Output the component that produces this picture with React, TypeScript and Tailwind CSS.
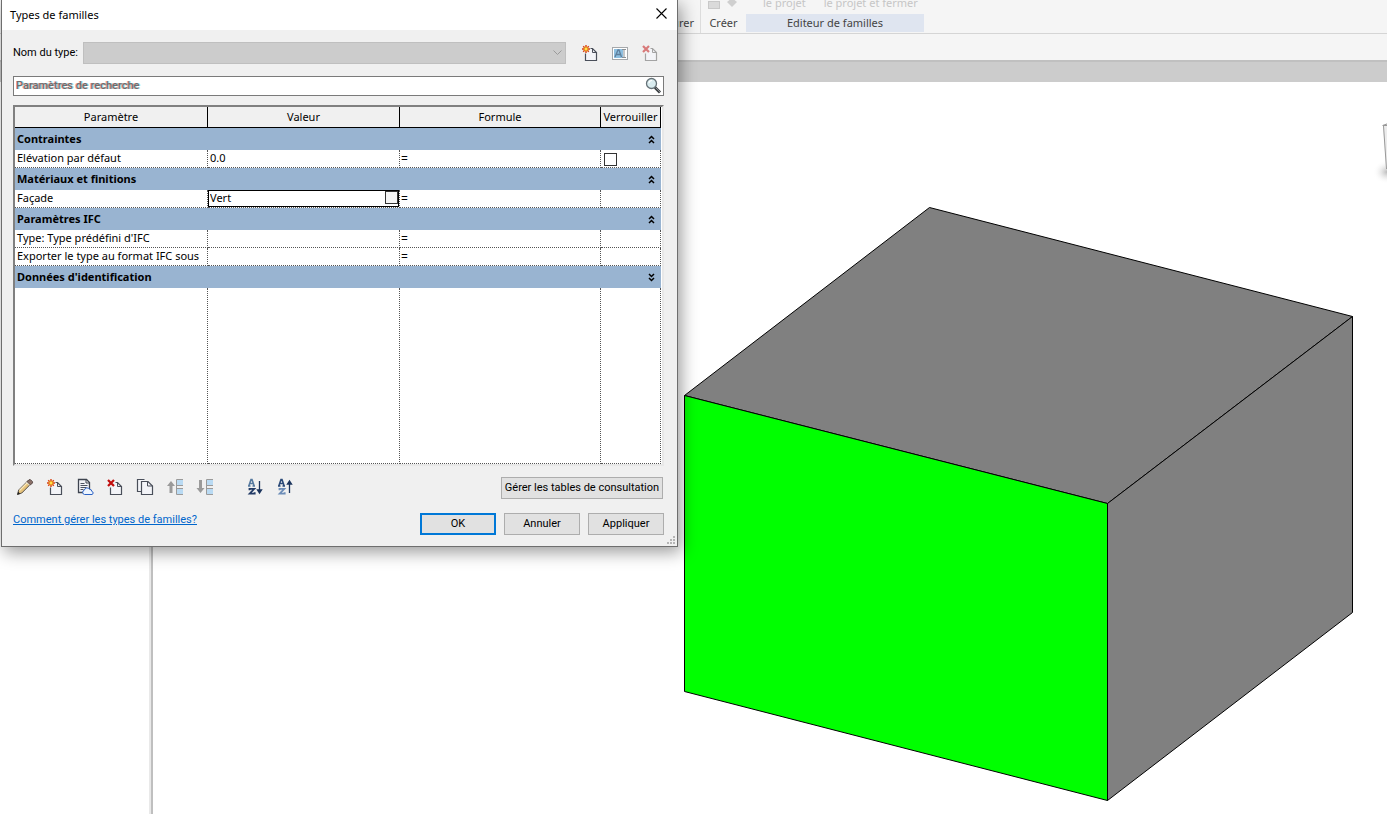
import type { ReactNode } from "react";

function Svg({ children, size = 18 }: { children: ReactNode; size?: number }) {
  return (
    <svg width={size} height={size} viewBox={`0 0 ${size} ${size}`} fill="none" aria-hidden="true">
      {children}
    </svg>
  );
}

function Page({ stroke = "#4a4f5a" }: { stroke?: string }) {
  return (
    <>
      <path d="M8 4.500h3l4.500 4v8.500h-11V9.500L8 9z" fill="#f3f4f8" />
      <path d="M4.500 9.500v7h11V8.500l-4-4H9.500" stroke={stroke} strokeWidth="1.200" />
      <path d="M11.500 4.500v4h4" stroke={stroke} />
    </>
  );
}

function Spark() {
  return (
    <>
      <path d="M5 1v8M1 5h8M2.200 2.200l5.600 5.600M7.800 2.200L2.200 7.800" stroke="#d8400f" strokeWidth="1.400" />
      <circle cx="5" cy="5" r="1.900" fill="#ffe14d" stroke="#e88a10" strokeWidth=".8" />
    </>
  );
}

function NewIcon() {
  return (
    <Svg>
      <Page />
      <Spark />
    </Svg>
  );
}

function DeleteIcon({ muted = false }: { muted?: boolean }) {
  return (
    <Svg>
      <Page stroke={muted ? "#a3a3a3" : "#4a4f5a"} />
      <path d="M2 2l6 6M8 2L2 8" stroke={muted ? "#d87a7a" : "#c00d0d"} strokeWidth="2.200" />
    </Svg>
  );
}

function RenameIcon() {
  return (
    <Svg>
      <rect x="1.500" y="3.500" width="15" height="12" fill="#fff" stroke="#a5a8ab" />
      <rect x="3" y="5" width="9" height="9" fill="#8dbfe0" />
      <path d="M4 13l3-7h1l2.500 7M5.500 10.500h4" stroke="#5f7f9c" strokeWidth="1.300" />
      <path d="M11 5.500h4M13 5.500v8M11 13.500h4" stroke="#8a8f94" />
    </Svg>
  );
}

function PencilIcon() {
  return (
    <Svg>
      <path d="M1.500 16.500l1.200-4.500L12.500 2.200l3 3L5.800 15z" fill="#e6c27a" stroke="#55504a" />
      <path d="M3.500 12.500L12 4" stroke="#fbe9bd" strokeWidth="1.300" />
      <path d="M11 3.700l2-2h1.500l2 2v1.200l-2 2z" fill="#8b7068" stroke="#5b4d4a" />
      <path d="M10.500 4.200l3.200 3.200" stroke="#dfe3e8" />
      <path d="M1.200 16.800l1-3 2 2z" fill="#222" />
    </Svg>
  );
}

function SharedIcon() {
  return (
    <Svg>
      <path d="M2.500 1.500h8l3 3v10h-11z" fill="#f3f4f8" stroke="#3e444f" strokeWidth="1.300" />
      <path d="M10 1.500v3.500h3.500" stroke="#3e444f" />
      <path d="M4.500 5.500h4M4.500 7.500h7M4.500 9.500h6M4.500 11.500h3" stroke="#4b5260" />
      <path
        d="M8.500 16.500a2.200 2.200 0 01-.2-4.300 2.900 2.900 0 015.400-.8 2 2 0 012.100 2 1.600 1.600 0 01.2 3.100z"
        fill="#eef5ff"
        stroke="#2c62c4"
      />
    </Svg>
  );
}

function CopyIcon() {
  return (
    <Svg>
      <path d="M5 13.500H1.500v-12h7" stroke="#4a4f5a" fill="#f3f4f8" strokeWidth="1.200" />
      <path d="M5.500 3.500h6.500l4.500 4.500v8.500h-11z" fill="#f3f4f8" stroke="#4a4f5a" strokeWidth="1.200" />
      <path d="M11.500 3.500v4.500h5" stroke="#4a4f5a" />
    </Svg>
  );
}

function MoveIcon({ down = false }: { down?: boolean }) {
  return (
    <Svg>
      <rect x="11" y="2" width="6" height="5" fill="#b9daf3" />
      <rect x="11" y="11" width="6" height="5" fill="#b9daf3" />
      <path d="M17 1.500h-6.500v15H17M10.500 7.500H17M10.500 10.500H17" stroke="#9a9a9a" />
      {down ? (
        <path d="M3 2h3v8h2.500l-4 5-4-5H3z" fill="#9a9a9a" />
      ) : (
        <path d="M3.500 15h3V8H9L5 3 1 8h2.500z" fill="#9a9a9a" />
      )}
    </Svg>
  );
}

function SortIcon({ up = false }: { up?: boolean }) {
  return (
    <Svg>
      <path
        d="M3 7.500l2-6h1l2 6M4 5.500h3M2 8h2.500M6.500 8H9"
        stroke={up ? "#2b4a78" : "#55799f"}
        strokeWidth="1.600"
      />
      <path d="M3.500 12.300v-1.500h4.800L3.700 15.700h5v-1.500" stroke={up ? "#6d8db8" : "#223b66"} strokeWidth="1.800" />
      {up ? (
        <path d="M13.500 15V5M11.500 6l2-3 2 3z" stroke="#1c355e" strokeWidth="1.300" fill="#1c355e" />
      ) : (
        <path d="M13.500 3v10M11.500 12l2 3 2-3z" stroke="#1c355e" strokeWidth="1.300" fill="#1c355e" />
      )}
    </Svg>
  );
}

function SearchIcon() {
  return (
    <Svg>
      <path d="M11 10.500l5 5" stroke="#3c4043" strokeWidth="3" />
      <path d="M12 11l4 4" stroke="#8b9094" />
      <circle cx="7.500" cy="6.500" r="5" fill="#d9ecef" stroke="#667278" strokeWidth="1.300" />
      <path d="M5 6a3 3 0 013-2.500" stroke="#fff" strokeWidth="1.200" />
    </Svg>
  );
}

function Chevrons({ down = false }: { down?: boolean }) {
  return (
    <svg width="7" height="9" viewBox="0 0 7 9" fill="none" aria-hidden="true">
      <path
        d={down ? "M1 1l2.500 2.500L6 1M1 5l2.500 2.500L6 5" : "M1 4l2.500-2.500L6 4M1 8l2.500-2.500L6 8"}
        stroke="#000"
        strokeWidth="1.500"
      />
    </svg>
  );
}

function IconButton({ label, children, disabled }: { label: string; children: ReactNode; disabled?: boolean }) {
  return (
    <button type="button" aria-label={label} disabled={disabled} className="flex size-[18px] items-center justify-center">
      {children}
    </button>
  );
}

function PushButton({ children, primary, wide }: { children: ReactNode; primary?: boolean; wide?: boolean }) {
  return (
    <button
      type="button"
      className={`flex h-[22px] items-center justify-center whitespace-nowrap bg-[#e1e1e1] ${
        primary ? "border-2 border-[#0078d7]" : "border border-[#adadad]"
      } ${wide ? "w-[162px]" : "w-[76px]"}`}
    >
      {children}
    </button>
  );
}

function GroupRow({ title, collapsed }: { title: string; collapsed?: boolean }) {
  return (
    <tr className="h-[22px] bg-[#99b4d1]">
      <th colSpan={4} scope="rowgroup" className="p-0 text-left font-bold">
        <div className="flex items-center justify-between pr-1.5 pl-0.5">
          <span>{title}</span>
          <button type="button" aria-label={title} aria-expanded={!collapsed}>
            <Chevrons down={collapsed} />
          </button>
        </div>
      </th>
    </tr>
  );
}

const cell = "border-r border-b border-dotted border-[#555] p-0";

function ParamRow({ name, value, lock }: { name: string; value?: ReactNode; lock?: boolean }) {
  return (
    <tr className="h-[18px]">
      <td className={`${cell} overflow-hidden pb-0.5 pl-0.5 whitespace-nowrap`}>{name}</td>
      <td className={cell}>{value}</td>
      <td className={`${cell} pl-px text-[12px]`}>=</td>
      <td className={`${cell} pl-[3px]`}>
        {lock && (
          <input
            type="checkbox"
            aria-label={`Verrouiller ${name}`}
            className="mt-0.5 block size-[13px] appearance-none border border-[#333] bg-white"
          />
        )}
      </td>
    </tr>
  );
}

function ParameterTable() {
  return (
    <div className="border-2 border-t-[#808080] border-r-[#e8e8e8] border-b-[#e8e8e8] border-l-[#808080] bg-white pr-px font-['Noto_Sans',sans-serif]">
      <table className="w-full table-fixed border-separate border-spacing-0 leading-[14px]">
        <colgroup>
          <col className="w-[193px]" />
          <col className="w-[192px]" />
          <col />
          <col className="w-[60px]" />
        </colgroup>
        <thead>
          <tr className="h-[21px] bg-[#f0f0f0]">
            {["Paramètre", "Valeur", "Formule", "Verrouiller"].map((h) => (
              <th key={h} scope="col" className="border-r border-b border-black p-0 text-center font-normal">
                {h}
              </th>
            ))}
          </tr>
        </thead>
        <tbody>
          <GroupRow title="Contraintes" />
          <ParamRow name="Elévation par défaut" value={<div className="pb-0.5 pl-0.5">0.0</div>} lock />
          <GroupRow title="Matériaux et finitions" />
          <ParamRow
            name="Façade"
            value={
              <div className="flex h-[17px] border border-black">
                <input aria-label="Façade" defaultValue="Vert" className="min-w-0 flex-1 pb-px pl-px outline-none" />
                <button type="button" aria-label="Parcourir" className="size-[13px] border border-[#333] bg-[#f5f5f5]" />
              </div>
            }
          />
          <GroupRow title="Paramètres IFC" />
          <ParamRow name="Type: Type prédéfini d'IFC" />
          <ParamRow name="Exporter le type au format IFC sous" />
          <GroupRow title="Données d'identification" collapsed />
          <tr className="h-[176px]">
            <td className={cell} />
            <td className={cell} />
            <td className={cell} />
            <td className={cell} />
          </tr>
        </tbody>
      </table>
    </div>
  );
}

function FamilyTypesDialog() {
  return (
    <section
      role="dialog"
      aria-labelledby="dialog-title"
      className="absolute top-0 left-px w-[677px] max-w-full border-x border-b border-[#6e6e6e] bg-[#f0f0f0] font-['Roboto',sans-serif] shadow-[3px_5px_16px_rgba(0,0,0,0.4)]"
    >
      <header className="flex h-[30px] items-center justify-between bg-white pr-2.5 pl-2">
        <h1 id="dialog-title" className="font-['Noto_Sans',sans-serif]">Types de familles</h1>
        <button type="button" aria-label="Fermer" className="pb-1">
          <svg width="11" height="11" viewBox="0 0 11 11" aria-hidden="true">
            <path d="M.5.5l10 10M10.500.5l-10 10" stroke="#000" strokeWidth="1.100" />
          </svg>
        </button>
      </header>

      <div className="flex flex-col pt-3 pr-[13px] pb-[11px] pl-[11px]">
        <div className="flex items-center">
          <label htmlFor="type-name" className="w-[70px] whitespace-nowrap">Nom du type:</label>
          <div className="relative flex-1">
            <select
              id="type-name"
              disabled
              className="block h-[22px] w-full appearance-none border border-[#bfbfbf] bg-[#cccccc] opacity-100"
            />
            <svg className="absolute top-2 right-1" width="9" height="6" viewBox="0 0 9 6" fill="none" aria-hidden="true">
              <path d="M.5.5l4 4 4-4" stroke="#9a9a9a" />
            </svg>
          </div>
          <div className="flex gap-3 pr-[5px] pl-[15px]">
            <IconButton label="Nouveau type"><NewIcon /></IconButton>
            <IconButton label="Renommer le type" disabled><RenameIcon /></IconButton>
            <IconButton label="Supprimer le type" disabled><DeleteIcon muted /></IconButton>
          </div>
        </div>

        <div className="mt-3 mb-[9px] flex h-5 items-center border border-[#7a7a7a] bg-white pr-px">
          <input
            type="search"
            aria-label="Paramètres de recherche"
            placeholder="Paramètres de recherche"
            className="min-w-0 flex-1 pl-0.5 outline-none placeholder:font-medium placeholder:text-[#6d6d6d] placeholder:[text-shadow:-1px_0_#ff505080,1px_0_#30d0d080]"
          />
          <IconButton label="Rechercher"><SearchIcon /></IconButton>
        </div>

        <ParameterTable />

        <div className="mt-[11px] flex items-start justify-between pr-px">
          <div className="flex gap-3 pt-px pl-[3px]">
            <IconButton label="Modifier le paramètre"><PencilIcon /></IconButton>
            <IconButton label="Nouveau paramètre"><NewIcon /></IconButton>
            <IconButton label="Paramètre partagé"><SharedIcon /></IconButton>
            <IconButton label="Supprimer le paramètre"><DeleteIcon /></IconButton>
            <IconButton label="Dupliquer"><CopyIcon /></IconButton>
            <IconButton label="Monter" disabled><MoveIcon /></IconButton>
            <IconButton label="Descendre" disabled><MoveIcon down /></IconButton>
            <div className="flex gap-3 pl-5">
              <IconButton label="Tri croissant"><SortIcon /></IconButton>
              <IconButton label="Tri décroissant"><SortIcon up /></IconButton>
            </div>
          </div>
          <PushButton wide>Gérer les tables de consultation</PushButton>
        </div>

        <div className="mt-3.5 flex items-start justify-between">
          <a href="#aide" className="text-[#0066cc] underline">Comment gérer les types de familles?</a>
          <div className="flex gap-2">
            <PushButton primary>OK</PushButton>
            <PushButton>Annuler</PushButton>
            <PushButton>Appliquer</PushButton>
          </div>
        </div>
      </div>

      <svg className="absolute right-0.5 bottom-0.5" width="8" height="8" viewBox="0 0 8 8" fill="#b5b5b5" aria-hidden="true">
        <path d="M6 0h2v2H6zM3 3h2v2H3zM6 3h2v2H6zM0 6h2v2H0zM3 6h2v2H3zM6 6h2v2H6z" />
      </svg>
    </section>
  );
}

function Ribbon() {
  return (
    <div className="bg-[#f5f5f5] text-[#444]">
      <div className="flex h-[33px] overflow-hidden">
        <div className="flex w-[701px] items-end justify-end border-r border-[#dcdcdc] pr-1.5 pb-[3px]">Mesurer</div>
        <div className="flex w-[45px] flex-col justify-between pb-[3px] text-center">
          <svg width="45" height="10" viewBox="0 0 45 10" aria-hidden="true">
            <rect x="7.500" y="1.500" width="11" height="7" fill="#dadada" stroke="#c8c8c8" />
            <path d="M26 2l5-4 5 4-5 5z" fill="#cfcfcf" />
          </svg>
          <span>Créer</span>
        </div>
        <div className="flex w-[178px] flex-col justify-between">
          <div className="-mt-[6px] flex gap-[18px] pl-[17px] leading-[18px] whitespace-nowrap text-[#c6c6c6]">
            <span>le projet</span>
            <span>le projet et fermer</span>
          </div>
          <div className="mb-px bg-[#dfe5f0] text-center leading-[18px]">Editeur de familles</div>
        </div>
      </div>
      <div className="h-[27px] border-t border-[#d5d5d5]" />
      <div className="h-[22px] border-t-2 border-[#c0c0c0] bg-[#cccccc]" />
    </div>
  );
}

function Viewport() {
  return (
    <div className="relative flex-1 overflow-hidden bg-white">
      <svg
        className="absolute top-[124px] left-[530px]"
        width="671"
        height="596"
        viewBox="683 206 671 596"
        stroke="#000"
        strokeLinejoin="round"
        role="img"
        aria-label="Volume 3D"
      >
        <path d="M929.500 207.500L1352.500 316.500L1107.500 503.500L684.500 395.500Z" fill="#808080" />
        <path d="M1352.500 316.500V612.500L1107.500 800.500V503.500Z" fill="#808080" />
        <path d="M684.500 395.500L1107.500 503.500V800.500L684.500 691.500Z" fill="#00ff00" />
      </svg>
      <svg className="absolute top-10 right-0" width="16" height="64" viewBox="0 0 16 64" aria-hidden="true">
        <defs>
          <radialGradient id="cube-shadow">
            <stop offset="0" stopColor="#bbb" />
            <stop offset="1" stopColor="#fff" stopOpacity="0" />
          </radialGradient>
        </defs>
        <ellipse cx="16" cy="50" rx="14" ry="12" fill="url(#cube-shadow)" />
        <path d="M12 3l4-2v45l-1-1z" fill="#ececec" />
        <path d="M11.500 3.500L16 2M12 3.500H16M12.500 4l3 43" stroke="#999" fill="none" />
      </svg>
    </div>
  );
}

export default function App() {
  return (
    <main className="relative flex min-h-screen flex-col overflow-hidden bg-white font-['Noto_Sans','Open_Sans',sans-serif] text-[11px] leading-[14px] text-black">
      <Ribbon />
      <div className="flex flex-1">
        <aside className="w-[151px] border-r-2 border-[#e9e9e9] bg-white" />
        <div className="w-0.5 bg-[#bfbfbf]" />
        <Viewport />
      </div>
      <FamilyTypesDialog />
    </main>
  );
}
